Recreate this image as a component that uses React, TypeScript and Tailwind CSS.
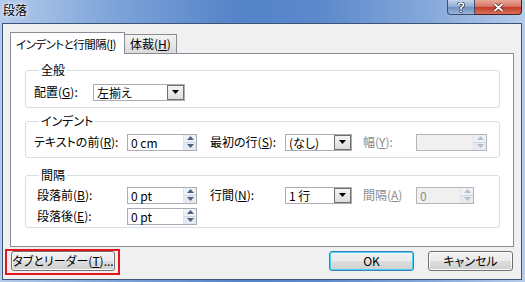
import React from "react";

const Arrow = ({ up, color = "#4c607f" }: { up?: boolean; color?: string }) => (
  <svg width="7" height="4" viewBox="0 0 7 4">
    <path d={up ? "M3.5 0 L7 4 L0 4 Z" : "M0 0 L7 0 L3.5 4 Z"} fill={color} />
  </svg>
);

const Combo = ({ value, w }: { value: string; w: string }) => (
  <div className={`flex h-[17px] ${w} border border-[#abadb3] bg-white`}>
    <div className="flex-1 pl-[3px] leading-[15px]">{value}</div>
    <div className="flex w-[17px] items-center justify-center border border-[#707070] bg-[linear-gradient(#f4f4f4,#dcdcdc)]">
      <Arrow color="#000" />
    </div>
  </div>
);

const Spin = ({ value, w, disabled }: { value: string; w: string; disabled?: boolean }) => (
  <div
    className={`flex h-[17px] ${w} border ${
      disabled ? "border-[#b5b5b5] bg-[#f0f0f0] text-[#8d8d8d]" : "border-[#abadb3] bg-white"
    }`}
  >
    <div className="flex-1 pl-[3px] leading-[15px]">{value}</div>
    <div className="flex w-[13px] flex-col border-l border-[#dfe3e8]">
      <div className="flex flex-1 items-center justify-center border-b border-[#cfd6de] bg-[#eef2f6]">
        <Arrow up color={disabled ? "#b8bec6" : "#4c607f"} />
      </div>
      <div className="flex flex-1 items-center justify-center bg-[#e6ebf1]">
        <Arrow color={disabled ? "#b8bec6" : "#4c607f"} />
      </div>
    </div>
  </div>
);

const Btn = ({ children, w, def }: { children: React.ReactNode; w: string; def?: boolean }) => (
  <div
    className={`flex h-[20px] ${w} items-center justify-center whitespace-nowrap rounded-[3px] border ${
      def ? "border-[#3c7fb1] shadow-[inset_0_0_0_1px_#48d2fb]" : "border-[#707070] shadow-[inset_0_0_0_1px_#fbfbfb]"
    } bg-[linear-gradient(#f2f2f2_0%,#ebebeb_50%,#dddddd_51%,#cfcfcf_100%)]`}
  >
    {children}
  </div>
);

const Group = ({ title, h, className, children }: { title: string; h: string; className?: string; children: React.ReactNode }) => (
  <fieldset className={`${h} ${className ?? ""} rounded-[3px] border border-[#d5dfe5] pl-[8px]`}>
    <legend className="ml-[5px] px-[2px] leading-[14px]">{title}</legend>
    {children}
  </fieldset>
);

export default function App() {
  return (
    <div
      className="flex h-[282px] w-[525px] flex-col whitespace-nowrap bg-[linear-gradient(90deg,#b4cbeb_0%,#7da3d9_22%,#5583c8_45%,#5a88cb_60%,#86a9db_82%,#b6ccea_100%)] text-[12px] text-black [font-family:'Noto_Sans_CJK_JP','Noto_Sans',sans-serif] [font-feature-settings:'palt']"
    >
      <div className="flex h-[23px] items-start justify-between">
        <div className="ml-[3px] mt-[3px] text-[12px] leading-[14px] [text-shadow:0_0_5px_#fff,0_0_3px_#fff]">段落</div>
        <div className="mr-[3px] flex h-[15px]">
          <div className="flex w-[28px] items-center justify-center rounded-bl-[4px] border border-t-0 border-[#3f4f6a] bg-[linear-gradient(#c3d4ea,#8eaad2_50%,#6f8fbf_51%,#9ab4da)]">
            <svg width="8" height="11" viewBox="0 0 8 11">
              <path d="M1.5 3 Q1.5 1 4 1 Q6.5 1 6.5 3 Q6.5 4.5 4 5.5 L4 7" fill="none" stroke="#2a3850" strokeWidth="3" />
              <path d="M1.5 3 Q1.5 1 4 1 Q6.5 1 6.5 3 Q6.5 4.5 4 5.5 L4 7" fill="none" stroke="#fff" strokeWidth="1.6" />
              <rect x="2.6" y="8" width="2.8" height="2.8" fill="#2a3850" />
              <rect x="3.2" y="8.6" width="1.6" height="1.6" fill="#fff" />
            </svg>
          </div>
          <div className="flex w-[47px] items-center justify-center rounded-br-[4px] border border-l-0 border-t-0 border-[#4a2020] bg-[linear-gradient(#e8a898,#d47060_50%,#c43a28_51%,#d8705c)]">
            <svg width="11" height="9" viewBox="0 0 11 9">
              <path d="M1.5 1 L9.5 8 M9.5 1 L1.5 8" stroke="#3a1a1a" strokeWidth="3.2" />
              <path d="M1.5 1 L9.5 8 M9.5 1 L1.5 8" stroke="#fff" strokeWidth="1.8" />
            </svg>
          </div>
        </div>
      </div>

      <div className="ml-[2px] mr-[3px] flex h-[257px] flex-col border border-[#3c5478] bg-[#f0f0f0] pl-[7px] pt-[7px]">
        <div className="flex h-[22px] items-end">
          <div className="relative z-10 -mb-px flex h-[22px] w-[115px] items-center border border-b-0 border-[#898c95] bg-white pl-[5px] text-[11.5px] leading-[14px] tracking-[-0.5px]">
            インデントと行間隔(<span className="underline">I</span>)
          </div>
          <div className="flex h-[19px] w-[52px] items-center border border-b-0 border-l-0 border-[#898c95] bg-[linear-gradient(#f3f3f3,#dadada)] pl-[5px] leading-[14px]">
            体裁(<span className="underline">H</span>)
          </div>
        </div>

        <div className="flex h-[194px] w-[504px] flex-col border border-[#898c95] bg-white pl-[14px] pr-[13px] pt-[9px]">
          <Group title="全般" h="h-[45px]">
            <div className="mt-[6px] flex items-center">
              <span className="w-[59px]">
                配置(<span className="underline">G</span>):
              </span>
              <Combo value="左揃え" w="w-[92px]" />
            </div>
          </Group>

          <Group title="インデント" h="h-[44px]" className="mt-[6px]">
            <div className="mt-[5px] flex items-center">
              <span className="w-[93px]">
                テキストの前(<span className="underline">R</span>):
              </span>
              <Spin value="0 cm" w="w-[70px]" />
              <span className="ml-[13px] w-[75px]">
                最初の行(<span className="underline">S</span>):
              </span>
              <Combo value="(なし)" w="w-[67px]" />
              <span className="ml-[11px] w-[53px] text-[#8d8d8d]">
                幅(<span className="underline">Y</span>):
              </span>
              <Spin value="" w="w-[71px]" disabled />
            </div>
          </Group>

          <Group title="間隔" h="h-[60px]" className="mt-[10px]">
            <div className="mt-[4px] flex items-center">
              <span className="w-[93px] pl-[3px]">
                段落前(<span className="underline">B</span>):
              </span>
              <Spin value="0 pt" w="w-[70px]" />
              <span className="ml-[13px] w-[75px]">
                行間(<span className="underline">N</span>):
              </span>
              <Combo value="1 行" w="w-[67px]" />
              <span className="ml-[11px] w-[53px] text-[#8d8d8d]">
                間隔(<span className="underline">A</span>)
              </span>
              <Spin value="0" w="w-[58px]" disabled />
            </div>
            <div className="mt-[3px] flex items-center">
              <span className="w-[93px] pl-[3px]">
                段落後(<span className="underline">E</span>):
              </span>
              <Spin value="0 pt" w="w-[70px]" />
            </div>
          </Group>
        </div>

        <div className="ml-[-5px] mt-[2px] flex items-start">
          <div className="border-2 border-[#e8141c] pb-[2px] pl-[4px] pr-[3px]">
            <Btn w="w-[104px]">
              タブとリーダー(<span className="underline">T</span>)...
            </Btn>
          </div>
          <div className="ml-[209px] mt-[2px]">
            <Btn w="w-[85px]" def>
              OK
            </Btn>
          </div>
          <div className="ml-[14px] mt-[2px]">
            <Btn w="w-[85px]">キャンセル</Btn>
          </div>
        </div>
      </div>
    </div>
  );
}
